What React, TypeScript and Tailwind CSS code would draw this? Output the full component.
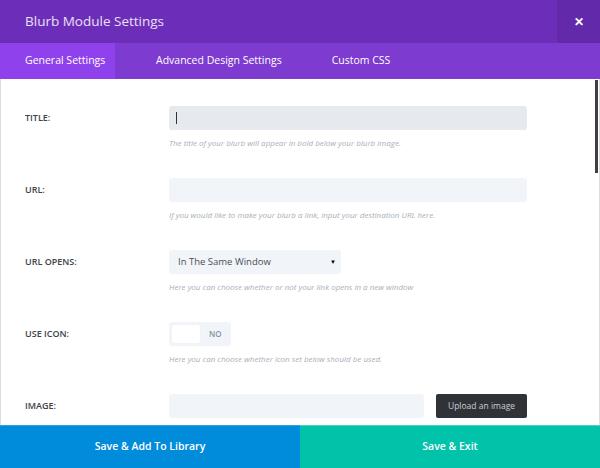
const font = { fontFamily: '"Open Sans", "Noto Sans", sans-serif' };

function Label({ text }: { text: string }) {
  return (
    <div className="flex h-[24px] w-[168px] shrink-0 items-center pl-[24px] text-[9px] font-semibold uppercase text-[#3d4349]">
      {text}
    </div>
  );
}

function Row({ label, desc, children }: { label: string; desc?: string; children: React.ReactNode }) {
  return (
    <div className="flex h-[72px]">
      <Label text={label} />
      <div className="flex-1">
        {children}
        {desc && <p className="mt-[8px] text-[8px] italic leading-[10px] text-[#a8b0b8]">{desc}</p>}
      </div>
    </div>
  );
}

export default function App() {
  return (
    <div style={font} className="flex h-[468px] w-[600px] flex-col overflow-hidden bg-white">
      <div className="flex h-[43px] shrink-0 items-center bg-[#6c2eb9]">
        <h1 className="flex-1 pl-[25px] text-[13.5px] text-white/85">Blurb Module Settings</h1>
        <button type="button" className="flex h-full w-[43px] items-center justify-center bg-[#622aab] text-[12px] font-bold text-white">
          ✕
        </button>
      </div>

      <div className="flex h-[36px] shrink-0 text-[10.5px] text-white">
        <div className="flex w-[115px] items-center bg-[#8f42ec] pl-[25px]">General Settings</div>
        <div className="flex flex-1 items-center bg-[#7e3bd0]">
          <span className="ml-[41px]">Advanced Design Settings</span>
          <span className="ml-[50px]">Custom CSS</span>
        </div>
      </div>

      <div className="relative flex-1 overflow-hidden border-x border-[#dddddd] pt-[27px]">
        <div className="absolute right-[1px] top-[1px] h-[93px] w-[3px] bg-[#3b4045]" />

        <Row label="Title:" desc="The title of your blurb will appear in bold below your blurb image.">
          <div className="flex h-[24px] w-[358px] items-center rounded-[3px] bg-[#e6e9ed] pl-[7px]">
            <span className="h-[12px] w-px bg-[#333]" />
          </div>
        </Row>

        <Row label="URL:" desc="If you would like to make your blurb a link, input your destination URL here.">
          <div className="h-[24px] w-[358px] rounded-[3px] bg-[#f1f4f8]" />
        </Row>

        <Row label="URL Opens:" desc="Here you can choose whether or not your link opens in a new window">
          <div className="flex h-[24px] w-[172px] items-center justify-between rounded-[3px] bg-[#f1f4f8] pl-[9px] pr-[5px] text-[9.5px] text-[#4a4f55]">
            <span>In The Same Window</span>
            <span className="text-[6px] text-black">▼</span>
          </div>
        </Row>

        <Row label="Use Icon:" desc="Here you can choose whether icon set below should be used.">
          <div className="flex h-[24px] w-[62px] items-center rounded-[3px] bg-[#f1f4f8] p-[3px]">
            <div className="h-[18px] w-[28px] rounded-[2px] bg-white shadow-[0_0_1px_rgba(0,0,0,0.08)]" />
            <span className="pl-[9px] text-[8px] font-semibold text-[#8a949e]">NO</span>
          </div>
        </Row>

        <div className="flex">
          <Label text="Image:" />
          <div className="flex gap-[12px]">
            <div className="h-[24px] w-[255px] rounded-[3px] bg-[#f1f4f8]" />
            <button type="button" className="h-[24px] w-[91px] rounded-[2px] bg-[#2f3338] text-[8.5px] text-[#c9cdd2]">
              Upload an image
            </button>
          </div>
        </div>
      </div>

      <div className="flex h-[43px] shrink-0">
        <button type="button" className="flex-1 border-t border-[#2fa1e3] bg-[#008bdb] text-[10.5px] font-semibold text-white">
          Save &amp; Add To Library
        </button>
        <button type="button" className="flex-1 border-t border-[#47d4c3] bg-[#00c3aa] text-[10.5px] font-semibold text-white">
          Save &amp; Exit
        </button>
      </div>
    </div>
  );
}
